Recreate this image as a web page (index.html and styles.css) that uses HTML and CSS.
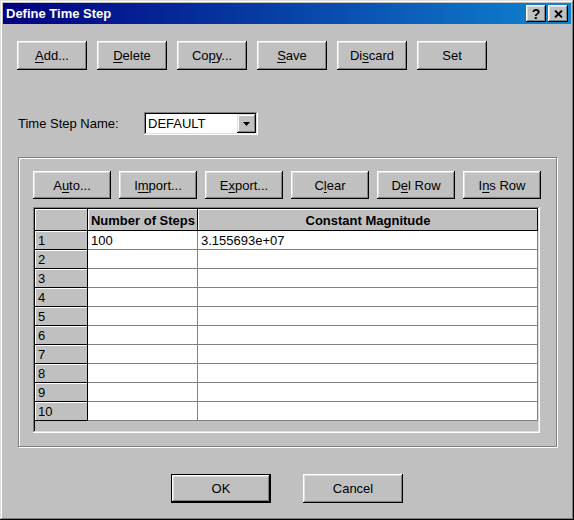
FILE: index.html
```html
<!DOCTYPE html>
<html>
<head>
<meta charset="utf-8">
<link rel="stylesheet" href="styles.css">
</head>
<body>
<div class="window">
  <div class="titlebar">
    <span class="title">Define Time Step</span>
    <div class="tbtns">
      <span class="tbtn help">?</span>
      <span class="tbtn"><svg width="9" height="8" viewBox="0 0 9 8"><path d="M1 0.5 L8 7.5 M8 0.5 L1 7.5" stroke="#000" stroke-width="1.8" fill="none"/></svg></span>
    </div>
  </div>
  <div class="toprow">
    <button class="btn top"><u>A</u>dd...</button>
    <button class="btn top"><u>D</u>elete</button>
    <button class="btn top">Co<u>p</u>y...</button>
    <button class="btn top"><u>S</u>ave</button>
    <button class="btn top">Di<u>s</u>card</button>
    <button class="btn top">Set</button>
  </div>
  <div class="namerow">
    <span class="label">Time Step Name:</span>
    <div class="combo">
      <span class="combo-text">DEFAULT</span>
      <span class="combo-btn"><svg width="7" height="4" viewBox="0 0 7 4"><path d="M0 0 H7 L3.5 4 Z" fill="#000"/></svg></span>
    </div>
  </div>
  <div class="group">
    <div class="gridbtns">
      <button class="btn inner">A<u>u</u>to...</button>
      <button class="btn inner">I<u>m</u>port...</button>
      <button class="btn inner">E<u>x</u>port...</button>
      <button class="btn inner">C<u>l</u>ear</button>
      <button class="btn inner">D<u>e</u>l Row</button>
      <button class="btn inner">I<u>n</u>s Row</button>
    </div>
    <div class="grid">
      <table>
        <colgroup><col class="c0"><col class="c1"><col class="c2"></colgroup>
        <tr class="hrow"><th class="hc"></th><th class="hc">Number of Steps</th><th class="hc">Constant Magnitude</th></tr>
        <tr><td class="rh">1</td><td class="dc">100</td><td class="dc">3.155693e+07</td></tr>
        <tr><td class="rh">2</td><td class="dc"></td><td class="dc"></td></tr>
        <tr><td class="rh">3</td><td class="dc"></td><td class="dc"></td></tr>
        <tr><td class="rh">4</td><td class="dc"></td><td class="dc"></td></tr>
        <tr><td class="rh">5</td><td class="dc"></td><td class="dc"></td></tr>
        <tr><td class="rh">6</td><td class="dc"></td><td class="dc"></td></tr>
        <tr><td class="rh">7</td><td class="dc"></td><td class="dc"></td></tr>
        <tr><td class="rh">8</td><td class="dc"></td><td class="dc"></td></tr>
        <tr><td class="rh">9</td><td class="dc"></td><td class="dc"></td></tr>
        <tr><td class="rh">10</td><td class="dc"></td><td class="dc"></td></tr>
      </table>
    </div>
  </div>
  <div class="okrow">
    <button class="btn wide default">OK</button>
    <button class="btn wide">Cancel</button>
  </div>
</div>
</body>
</html>
```
FILE: styles.css
```css
* { box-sizing: border-box; }
html, body { margin: 0; padding: 0; }
body {
  width: 574px;
  height: 520px;
  background: #c0c0c0;
  font-family: "Liberation Sans", Arial, sans-serif;
  font-size: 13px;
  color: #000;
  overflow: hidden;
}
.window {
  width: 574px;
  height: 520px;
  background: #c0c0c0;
  padding: 3px;
  box-shadow: inset -1px -1px #000, inset 1px 1px #dfdfdf, inset -2px -2px #808080, inset 2px 2px #fff;
}
.titlebar {
  height: 21px;
  background: linear-gradient(to right, #000080, #1084d0);
  display: flex;
  align-items: center;
  justify-content: space-between;
  padding: 0 3px 0 3px;
  color: #fff;
  font-weight: bold;
}
.tbtns { display: flex; gap: 2px; }
.tbtn {
  width: 20px;
  height: 17px;
  background: #c0c0c0;
  color: #000;
  font-size: 14px;
  font-weight: bold;
  display: flex;
  align-items: center;
  justify-content: center;
  box-shadow: inset -1px -1px #000, inset 1px 1px #fff, inset -2px -2px #808080, inset 2px 2px #dfdfdf;
}
.btn {
  font-family: "Liberation Sans", Arial, sans-serif;
  font-size: 13px;
  color: #000;
  background: #c0c0c0;
  border: none;
  padding: 0;
  margin: 0;
  box-shadow: inset -1px -1px #000, inset 1px 1px #fff, inset -2px -2px #808080, inset 2px 2px #dfdfdf;
}
.btn u { text-decoration: underline; text-underline-offset: 2px; }
.btn.top { width: 70px; height: 29px; }
.btn.inner { width: 78px; height: 28px; }
.btn.wide { width: 100px; height: 29px; }
.btn.default {
  box-shadow: inset 0 0 0 1px #000, inset -2px -2px #000, inset 2px 2px #fff, inset -3px -3px #808080, inset 3px 3px #dfdfdf;
}
.toprow {
  display: flex;
  gap: 10px;
  margin: 17px 0 0 14px;
}
.namerow {
  display: flex;
  align-items: center;
  height: 23px;
  margin: 42px 0 0 15px;
}
.label { width: 126px; }
.combo {
  width: 114px;
  height: 23px;
  background: #fff;
  padding: 2px;
  display: flex;
  box-shadow: inset -1px -1px #fff, inset 1px 1px #808080, inset -2px -2px #dfdfdf, inset 2px 2px #000;
}
.combo-text { flex: 1; padding-left: 2px; line-height: 19px; }
.combo-btn {
  width: 19px;
  height: 19px;
  background: #c0c0c0;
  display: flex;
  align-items: center;
  justify-content: center;
  box-shadow: inset -1px -1px #000, inset 1px 1px #dfdfdf, inset -2px -2px #808080, inset 2px 2px #fff;
}
.group {
  width: 539px;
  height: 290px;
  margin: 22px 0 0 15px;
  border: 1px solid #808080;
  box-shadow: inset 1px 1px #fff, 1px 1px #fff;
  padding: 13px 0 0 14px;
}
.gridbtns { display: flex; gap: 8px; }
.grid {
  margin-top: 8px;
  width: 507px;
  height: 226px;
  padding: 2px;
  background: #c0c0c0;
  box-shadow: inset -1px -1px #fff, inset 1px 1px #808080, inset -2px -2px #dfdfdf, inset 2px 2px #000;
}
table {
  border-spacing: 0;
  border-collapse: separate;
  table-layout: fixed;
  width: 503px;
}
col.c0 { width: 53px; }
col.c1 { width: 110px; }
col.c2 { width: 340px; }
tr { height: 19px; }
tr.hrow { height: 22px; }
th, td { padding: 0 0 0 2px; font-size: 13px; white-space: nowrap; overflow: hidden; }
th.hc {
  background: #c0c0c0;
  font-weight: bold;
  text-align: center;
  padding: 0;
  box-shadow: inset -1px -1px #000, inset 1px 1px #fff;
}
td.rh {
  background: #c0c0c0;
  box-shadow: inset -1px -1px #000, inset 1px 1px #fff;
  padding-left: 3px;
}
td.dc {
  background: #fff;
  box-shadow: inset -1px -1px #808080;
  padding-left: 3px;
}
.okrow {
  display: flex;
  justify-content: center;
  gap: 32px;
  margin-top: 27px;
}
```
